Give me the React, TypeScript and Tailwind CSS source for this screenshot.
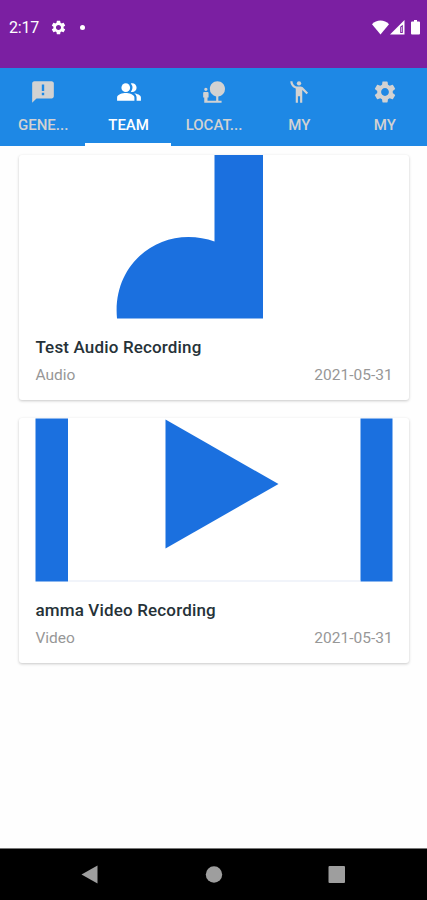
import React from 'react'
import { MdEmojiPeople, MdNaturePeople, MdPeopleAlt, MdSettings } from 'react-icons/md'

// Announcement bubble with a taller exclamation mark than the stock feedback icon
function FeedbackIcon({ className }: { className?: string }) {
    return (
        <svg className={className} viewBox="0 0 24 24" fill="currentColor">
            <path
                fillRule="evenodd"
                d="M20 2H4c-1.100 0-1.990.9-1.990 2L2 22l4-4h14c1.100 0 2-.9 2-2V4c0-1.100-.9-2-2-2zM10.900 5h2.200v6h-2.200zM10.900 12.800h2.200V15h-2.200z"
            />
        </svg>
    )
}

const tabs = [
    { label: 'GENE...', icon: FeedbackIcon },
    { label: 'TEAM', icon: MdPeopleAlt, active: true },
    { label: 'LOCAT...', icon: MdNaturePeople },
    { label: 'MY', icon: MdEmojiPeople },
    { label: 'MY', icon: MdSettings },
]

function StatusBar() {
    return (
        <header className="h-[68px] shrink-0 bg-[#7b1fa2] text-white flex items-start pt-[18px] pl-[9px] pr-[7px]">
            <span className="w-[41px] h-[19px] text-[16px] leading-[20px] tracking-[-0.2px]">2:17</span>
            <MdSettings className="w-[17px] h-[17px] mt-[1px]" />
            <span className="w-[5px] h-[5px] rounded-full bg-white mt-[7px] ml-[13px]" />
            <div className="ml-auto flex items-start">
                <svg className="w-[17px] h-[15px] mt-[2px]" viewBox="0 0 17 15" fill="currentColor">
                    <path d="M8.5 14.5 0 4.2C2.3 1.8 5.2.5 8.5.5s6.2 1.3 8.5 3.7z" />
                </svg>
                <svg className="w-[15px] h-[15px] mt-[2px] ml-[1px]" viewBox="0 0 15 15">
                    <path d="M0 14.5 14.5 0v14.5z" fill="currentColor" />
                    <path d="M10.2 6.8 12.8 4.800V13h-2.600z" fill="#7b1fa2" />
                    <path d="M11.200 7h.6v5h-.6z" fill="currentColor" />
                </svg>
                <svg className="w-[9px] h-[15px] mt-[2px] ml-[6px]" viewBox="0 0 9 15" fill="currentColor">
                    <path d="M3 0h3v1.500h2q1 0 1 1v11q0 1-1 1H1q-1 0-1-1v-11q0-1 1-1h2z" />
                </svg>
            </div>
        </header>
    )
}

function TabBar() {
    return (
        <nav className="h-[78px] shrink-0 grid grid-cols-5 bg-[#1e88e5]">
            {tabs.map(({ label, icon: Icon, active }, i) => (
                <button
                    key={i}
                    className={`flex flex-col items-center pt-[11px] pl-[1px] border-b-[3px] ${active ? 'text-white border-white' : 'text-[#d2d2d2] border-transparent'}`}
                >
                    <Icon className="w-[26px] h-[26px]" />
                    <span className="mt-[10px] text-[15px] leading-5 font-medium">{label}</span>
                </button>
            ))}
        </nav>
    )
}

interface RecordingCardProps {
    title: string
    type: string
    date: string
    children: React.ReactNode
}

function RecordingCard({ title, type, date, children }: RecordingCardProps) {
    return (
        <article className="h-[245px] bg-white rounded-[3px] px-4 shadow-[0_1px_3px_rgba(0,0,0,0.22)] flex flex-col">
            <div className="h-[163px] w-[357px]">{children}</div>
            <h2 className="mt-[17px] text-[17px] leading-6 tracking-[0.16px] font-medium text-[#263238]">{title}</h2>
            <div className="mt-[6px] flex justify-between text-[15.5px] leading-5 text-[#979797]">
                <span>{type}</span>
                <span>{date}</span>
            </div>
        </article>
    )
}

function AudioArt() {
    return (
        <svg className="w-full h-full overflow-visible" viewBox="-0.5 0 357 163" fill="#1b70df">
            <path d="M179 0h48.5v163.5H81.5C77 116 112 82 153 82c9 0 18 1.5 26 4.5z" />
        </svg>
    )
}

function VideoArt() {
    return (
        <svg className="w-full h-full overflow-visible" viewBox="-0.5 -0.5 357 163" fill="#1b70df">
            <path d="M0 0h32.5v163H0zM325 0h32v163h-32z" />
            <path d="M130 1 243 65.5 130 130z" />
            <path d="M32.500 162h292.500v1H32.500z" fill="#e3eaf6" />
        </svg>
    )
}

function NavigationBar() {
    return (
        <footer className="h-[52px] shrink-0 bg-black border-t border-[#777] flex items-center">
            <svg className="w-full h-[51px]" viewBox="0 0 427 51" fill="#9e9e9e">
                <path d="M81.5 25.5 97.5 16.5v18z" />
                <circle cx="214" cy="25.5" r="8.2" />
                <rect x="328.5" y="17" width="16.5" height="17" rx="1" />
            </svg>
        </footer>
    )
}

export default function App() {
    return (
        <div className="w-[427px] h-[900px] flex flex-col bg-[#fefefe] overflow-hidden font-[Roboto,sans-serif]">
            <StatusBar />
            <TabBar />
            <main className="flex-1 pt-[9px] pl-[19.4px] pr-[18.4px] flex flex-col gap-[18px]">
                <RecordingCard title="Test Audio Recording" type="Audio" date="2021-05-31">
                    <AudioArt />
                </RecordingCard>
                <RecordingCard title="amma Video Recording" type="Video" date="2021-05-31">
                    <VideoArt />
                </RecordingCard>
            </main>
            <NavigationBar />
        </div>
    )
}
